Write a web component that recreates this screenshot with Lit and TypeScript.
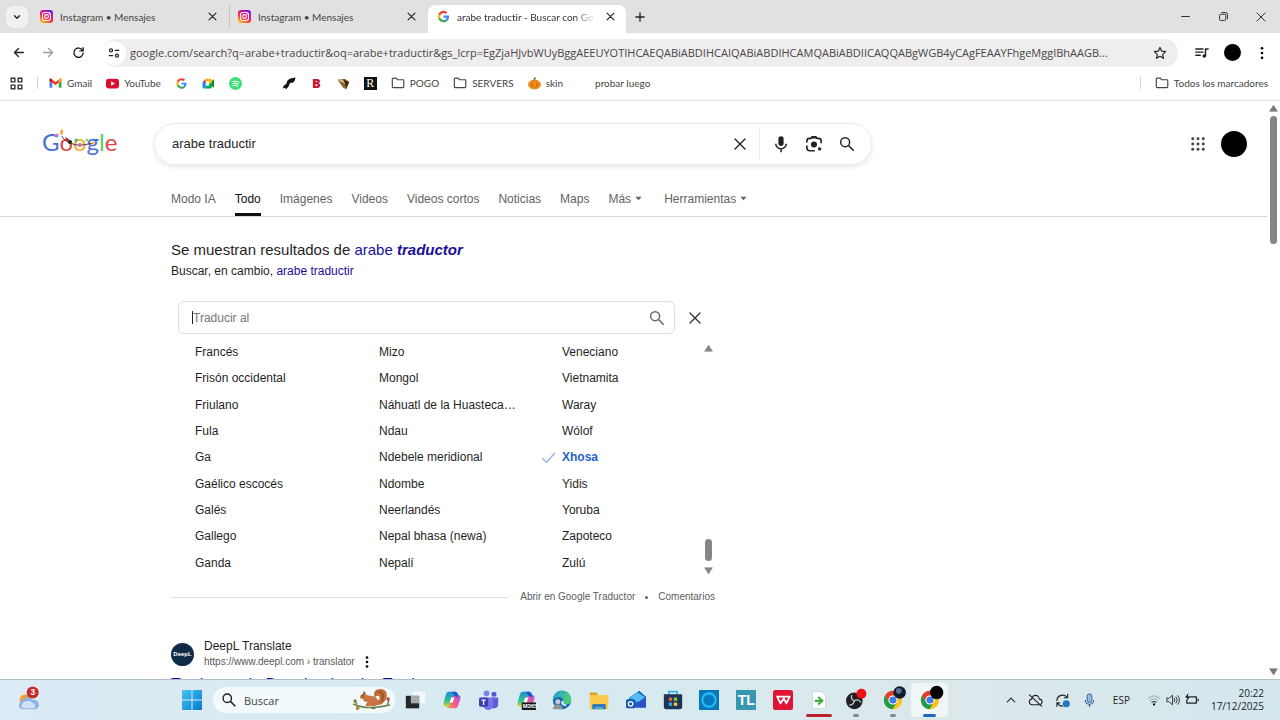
import { LitElement, html, css, svg, nothing } from "lit";
import { customElement } from "lit/decorators.js";
import { classMap } from "lit/directives/class-map.js";

const icon = (size: number, box: string, body: unknown, cls = "") =>
  html`<svg class="ico ${cls}" width=${size} height=${size} viewBox=${box} aria-hidden="true">${body}</svg>`;
const stroke = (d: string, w = 1.5) =>
  svg`<path d=${d} fill="none" stroke="currentColor" stroke-width=${w} stroke-linecap="round" stroke-linejoin="round"/>`;

const googleG = svg`
  <path fill="#ea4335" d="M24 9.500c3.540 0 6.710 1.220 9.210 3.600l6.850-6.850C35.900 2.380 30.470 0 24 0 14.620 0 6.510 5.380 2.560 13.220l7.980 6.190C12.430 13.720 17.740 9.500 24 9.500z"/>
  <path fill="#4285f4" d="M46.980 24.550c0-1.570-.15-3.090-.38-4.550H24v9.020h12.940c-.58 2.960-2.260 5.480-4.780 7.180l7.730 6c4.510-4.180 7.090-10.360 7.090-17.650z"/>
  <path fill="#fbbc05" d="M10.530 28.590c-.48-1.450-.76-2.990-.76-4.590s.27-3.140.76-4.590l-7.980-6.190C.92 16.460 0 20.120 0 24s.92 7.540 2.560 10.780z"/>
  <path fill="#34a853" d="M24 48c6.480 0 11.930-2.130 15.890-5.810l-7.730-6c-2.150 1.450-4.920 2.300-8.160 2.300-6.260 0-11.570-4.220-13.470-9.910l-7.980 6.190C6.510 42.620 14.620 48 24 48z"/>`;

const instagram = svg`
  <defs><linearGradient id="ig" x1=".2" y1="1" x2=".8" y2="0">
    <stop offset="0" stop-color="#ffc02e"/><stop offset=".4" stop-color="#fd2f3f"/><stop offset=".7" stop-color="#d3109c"/><stop offset="1" stop-color="#5b20e8"/>
  </linearGradient></defs>
  <rect width="26" height="26" rx="6" fill="url(#ig)"/>
  <rect x="5" y="5" width="16" height="16" rx="4.500" fill="none" stroke="#fff" stroke-width="2.200"/>
  <circle cx="13" cy="13" r="3.800" fill="none" stroke="#fff" stroke-width="2.200"/><circle cx="18" cy="8.200" r="1.200" fill="#fff"/>`;

const folder = stroke("M1.500 3.500a1 1 0 0 1 1-1h3.500l1.600 1.800h6a1 1 0 0 1 1 1v7a1 1 0 0 1-1 1h-11.100a1 1 0 0 1-1-1z", 1.3);
const cross = stroke("M3 3 13 13M13 3 3 13", 1.7);
const magnifier = svg`<circle cx="9.500" cy="9.500" r="6" fill="none" stroke="currentColor" stroke-width="2"/><path d="M14 14 21 21" stroke="currentColor" stroke-width="2.200"/>`;

const gmail = svg`<path fill="#4285f4" d="M1 20V6l5 4v10z"/><path fill="#34a853" d="M23 20V6l-5 4v10z"/>
  <path fill="#ea4335" d="M1 7V4.500C1 3 3 2.500 4.500 3.500L12 9l7.500-5.500C21 2.500 23 3 23 4.500V7l-11 8z"/><path fill="#fbbc04" d="M18 5v6l5-4V4.500C23 3 21 2.500 19.500 3.500z"/><path fill="#c5221f" d="M6 5v6L1 7V4.500C1 3 3 2.500 4.500 3.500z"/>`;
const youtube = svg`<rect x="0" y="3" width="24" height="18" rx="5" fill="#d8112f"/><path fill="#fff" d="M9.500 8v8l7-4z"/>`;
const meet = svg`<path fill="#00832d" d="M16 9l6-5v16l-6-5z"/><path fill="#2684fc" d="M1 9h6v12H3a2 2 0 0 1-2-2z"/><path fill="#ea4335" d="M7 3v6H1z"/><path fill="#ffba00" d="M7 3h9a2 2 0 0 1 2 2v7h-5V8H7z"/><path fill="#00ac47" d="M7 16h6v-4h5v7a2 2 0 0 1-2 2H7z"/>`;
const spotify = svg`<circle cx="12" cy="12" r="12" fill="#3dde75"/><g stroke="#e9fff0" fill="none" stroke-width="2" stroke-linecap="round"><path d="M5.500 8.500q7-2 13 1.200M6.500 12.300q5.500-1.500 10.500 1.200M7.200 16q4.500-1.200 8.500 1"/></g>`;
const blackMark = svg`<path fill="#111" d="M23 1C16 2 11 3 8 7L6 13 1 16l-1 5 4-1 1 3 5-5 3-7 6-1 3-4z"/>`;
const horn = svg`<path fill="#8b6330" d="M1 5 14 3l9 6-6 14-6-4z"/><path fill="#d9b77a" d="m2 6 9-2 5 9z"/><path fill="#3f2a15" d="m11 4 11 5-5 12-2-9z"/>`;
const pumpkin = svg`<ellipse cx="12" cy="14" rx="12" ry="9" fill="#f08a1c"/><path d="M12 6q-1-3 2-5" stroke="#7b7c2b" stroke-width="3" fill="none"/><path d="M7 12l2 3H5zM17 12l2 3h-4zM6 17q6 4 12 0-6 2-12 0" fill="#a84c08"/><path d="M9 6q-4 8 0 16M15 6q4 8 0 16" stroke="#cf6f10" fill="none"/>`;

const copilot = svg`<defs>
    <linearGradient id="cpA" x1="0" y1="0" x2="0" y2="1"><stop offset="0" stop-color="#178fe0"/><stop offset=".6" stop-color="#2fc08c"/><stop offset="1" stop-color="#e5d131"/></linearGradient>
    <linearGradient id="cpB" x1="1" y1="0" x2="0" y2="1"><stop offset="0" stop-color="#a858e6"/><stop offset=".5" stop-color="#f0558c"/><stop offset="1" stop-color="#ff9a44"/></linearGradient></defs>
  <path fill="url(#cpA)" d="M8 2h8q2 0 3 3l1 3h-5q-2 0-3 3l-2 7q-1 2-3 2H5q-4 0-3-5L4.500 6Q5.500 2 8 2z"/>
  <path fill="url(#cpB)" d="M16 22H8q-1.500 0-2-2 3 0 4-3l3-9q1-3 4-2h2q4 0 3 5l-2.500 7q-1 4-3.500 4z"/><path fill="#1f55cf" d="M12 2h4q2 0 3 3l1 3h-3l-2-1z"/><path fill="#fff" d="m11 9-2 6h4l2-6z"/>`;

const chromeIcon = svg`<circle cx="12" cy="12" r="11" fill="#fbc116"/><path fill="#e33b2e" d="M2.500 6.500A11 11 0 0 1 21.500 6.500H12a5.500 5.500 0 0 0-5 7.500z"/><path fill="#229a4b" d="M2.500 6.500A11 11 0 0 0 11.500 23l5-8.500a5.500 5.500 0 0 1-9.300 0z"/><circle cx="12" cy="12" r="5.500" fill="#fff"/><circle cx="12" cy="12" r="4.300" fill="#3b7de9"/>`;

type Task = { name: string; body: unknown; mark?: string; on?: boolean };
const TASKS: Task[] = [
  { name: "Vista de tareas", body: svg`<path fill="#f5f8f8" d="M9 2h15v14H9z"/><path fill="#232828" d="M1 7h16v15H1z"/><path fill="#a9adad" d="M7 7h10v9H7z"/>` },
  { name: "Copilot", body: copilot },
  { name: "Teams", body: svg`<circle cx="9" cy="4" r="3.500" fill="#7b83eb"/><circle cx="18" cy="5" r="3" fill="#5059c9"/><path fill="#5b5fd6" d="M14 9h9v8a5 5 0 0 1-9 3z"/><path fill="#7b74e8" d="M4 9h13v8a6 6 0 0 1-12 2z"/><rect y="9" width="11" height="11" rx="2" fill="#4240b0"/><path d="M3 12h5M5.500 12v6" stroke="#fff" stroke-width="1.500"/>` },
  { name: "Microsoft 365", body: svg`${copilot}<rect x="7" y="15" width="17" height="9" fill="#16181c"/><text class="tiny" x="8" y="22">M365</text>` },
  { name: "Edge", body: svg`<defs><linearGradient id="ed" x1="0" y1="0" x2="1" y2=".4"><stop offset="0" stop-color="#2398dc"/><stop offset="1" stop-color="#50ce72"/></linearGradient></defs>
    <circle cx="12" cy="12" r="11" fill="#1769b8"/><path fill="url(#ed)" d="M1 12a11 11 0 0 1 22-1q.5 6-6 6-5-1-3-5-3-5-8-3-5 2-5 3z"/><path fill="#e6f6fa" d="M14 12q-2 5 4 5.500l-2 2q-5-1-5-5z"/><circle cx="7" cy="14" r="3" fill="#c9cdd0"/><path fill="#909698" d="M1 23q1-6 6-6t6 6z"/>` },
  { name: "Explorador", body: svg`<path fill="#dba022" d="M1 3h8l2 3h12v6H1z"/><rect x="1" y="6" width="22" height="17" rx="1" fill="#fbcb4d"/><path fill="#1f75bb" d="M4 17h16v6H4z"/><path fill="#58a6dc" d="M7 20h10v3H7z"/>` },
  { name: "Outlook", body: svg`<path fill="#1469c6" d="m4 9 12-8 8 7v13H4z"/><path fill="#53bdf3" d="m4 9 10-6 9 6-9 6z"/><path fill="#2b52c9" d="m14 15 10-7v13H8z"/><rect y="11" width="11" height="11" rx="2" fill="#155bb0"/><circle cx="5.500" cy="16.500" r="2.700" fill="none" stroke="#fff" stroke-width="1.500"/>` },
  { name: "Store", body: svg`<path fill="none" stroke="#3daee9" stroke-width="2" d="M7 6V2h10v4"/><path fill="#1d3554" d="M1 5h22v15q0 3-3 3H4q-3 0-3-3z"/><path fill="#ef6044" d="M7 9h4v4H7z"/><path fill="#8bc34a" d="M13 9h4v4h-4z"/><path fill="#39a8ed" d="M7 15h4v4H7z"/><path fill="#fcc531" d="M13 15h4v4h-4z"/>` },
  { name: "Alexa", body: svg`<path fill="#0878bd" d="M0 0h24v24H0z"/><circle cx="12" cy="12" r="8" fill="none" stroke="#22c0f4" stroke-width="2.500"/>` },
  { name: "TL", body: svg`<path fill="#3797b0" d="M0 0h24v24H0z"/><text class="tl" x="2" y="18">TL</text>` },
  { name: "WPS", body: svg`<rect width="24" height="24" rx="3" fill="#df1434"/><path fill="none" stroke="#fff" stroke-width="2.200" stroke-linejoin="round" d="M4 8h12M5 8l4 8 4-6 3 6 4-8h-4"/>` },
  { name: "Documento", mark: "red", body: svg`<path fill="#fff" stroke="#c9d3cf" d="M4 2h11l5 5v15H4z"/><path d="M7 13h8M11 8.500l5 4.500-5 4.500" fill="none" stroke="#3dae3f" stroke-width="2.500"/>` },
  { name: "OBS", mark: "dot", body: svg`<circle cx="10" cy="13" r="10" fill="#202124"/><g fill="none" stroke="#c9cbce" stroke-width="1.500"><path d="M10 13q-5-2-3-7M10 13q5-3 8 2M10 13q-1 5-6 5"/></g><circle cx="18.500" cy="4.500" r="6" fill="#ee1018"/>` },
  { name: "Chrome", mark: "dot", body: svg`${chromeIcon}<circle cx="20" cy="3" r="7.500" fill="#131c2d"/><circle cx="19" cy="1" r="3.500" fill="#54719a"/>` },
  { name: "Chrome activo", mark: "blue", on: true, body: svg`${chromeIcon}<circle cx="20" cy="3" r="8" fill="#000"/>` },
];

const LANGS = [
  "Francés", "Frisón occidental", "Friulano", "Fula", "Ga", "Gaélico escocés", "Galés", "Gallego", "Ganda",
  "Mizo", "Mongol", "Náhuatl de la Huasteca…", "Ndau", "Ndebele meridional", "Ndombe", "Neerlandés", "Nepal bhasa (newa)", "Nepalí",
  "Veneciano", "Vietnamita", "Waray", "Wólof", "Xhosa", "Yidis", "Yoruba", "Zapoteco", "Zulú",
];

const base = css`
  * { box-sizing: border-box; }
  button, input { font: inherit; color: inherit; background: none; border: 0; padding: 0; margin: 0; outline: 0; }
  button { display: inline-flex; align-items: center; justify-content: center; flex: none; }
  a { color: inherit; text-decoration: none; }
  .ico { display: block; flex: none; overflow: visible; }
`;

@customElement("browser-chrome")
export class BrowserChrome extends LitElement {
  static styles = [base, css`
    :host { display: block; flex: none; font: 10px/16px Lato, "Open Sans", sans-serif; font-variant-ligatures: none; color: #444; border-bottom: 1px solid #e0e0e0; background: #fff; }
    .tabs { display: flex; height: 33px; background: #e1e1e1; padding-left: 6px; }
    .drop { width: 22px; height: 22px; margin: 6px 4px 0 0; border-radius: 8px; background: #f1f1f1; color: #222; }
    .tab { display: flex; align-items: center; gap: 7px; width: 198px; padding: 0 9px 0 8px; margin-top: 5px; height: 23px; border-right: 1px solid #c6c6c6; }
    .tab.last { border: 0; }
    .tab.on { height: 28px; padding: 0 8px 5px 9px; border: 0; border-radius: 8px 8px 0 0; background: #fff; color: #333; }
    .name { flex: 1; overflow: hidden; white-space: nowrap; }
    .on .name { mask-image: linear-gradient(90deg, #000 85%, transparent); }
    .tab button { width: 16px; height: 16px; color: #222; }
    .plus { width: 28px; height: 33px; color: #222; }
    .win { margin-left: auto; display: flex; color: #222; }
    .win button { width: 38px; height: 33px; }
    .bar { display: flex; align-items: center; gap: 4px; height: 39px; padding: 0 5px; color: #222; }
    .bar > button { width: 26px; height: 26px; }
    .dim { color: #999; }
    .omni { display: flex; align-items: center; flex: 1; gap: 4px; height: 28px; border-radius: 14px; background: #efedee; margin: 0 7px 0 7px; }
    .site { width: 24px; height: 24px; border-radius: 50%; background: #fff; }
    .omni input { flex: 1; min-width: 0; font: 11px/16px "Open Sans", sans-serif; text-overflow: ellipsis; color: #484848; }
    .omni .star { width: 36px; height: 28px; }
    .avatar { width: 17px; height: 17px; border-radius: 50%; background: #000; }
    .marks { display: flex; align-items: center; gap: 14px; height: 28px; padding: 0 12px 6px 10px; }
    .marks a { display: flex; align-items: center; gap: 5px; white-space: nowrap; }
    .sep { width: 1px; height: 12px; background: #d3d3d3; }
    .marks .sep { margin: 0 -3px 0 0; }
    .marks .push { margin: 0 0 0 auto; }
    .blank { width: 13px; height: 13px; }
    .sq { width: 13px; height: 13px; background: #111; color: #fff; font: 12px/13px "Liberation Serif", serif; text-align: center; }
    .bee { width: 13px; color: #c5122e; font: 800 13px/16px "Open Sans", sans-serif; text-align: center; }
  `];
  private tab(title: string, body: unknown, box: string, on = false, last = false) {
    return html`<div class=${classMap({ tab: true, on, last })}>${icon(13, box, body)}<span class="name">${title}</span>
      <button aria-label="Cerrar pestaña">${icon(11, "0 0 16 16", cross)}</button></div>`;
  }
  private mark(title: string, glyph: unknown) {
    return html`<a href="#" aria-label=${title || "Marcador"}>${glyph}${title ? html`<span>${title}</span>` : nothing}</a>`;
  }
  render() {
    const i = (b: unknown, box = "0 0 24 24") => icon(13, box, b);
    return html`
      <div class="tabs">
        <button class="drop" aria-label="Buscar pestañas">${icon(10, "0 0 16 16", stroke("M4 6l4 4 4-4", 2.2))}</button>
        ${this.tab("Instagram • Mensajes", instagram, "0 0 26 26")}
        ${this.tab("Instagram • Mensajes", instagram, "0 0 26 26", false, true)}
        ${this.tab("arabe traductir - Buscar con Go", googleG, "-3 -3 54 54", true)}
        <button class="plus" aria-label="Nueva pestaña">${icon(12, "0 0 16 16", stroke("M8 2.500v11M2.500 8h11", 1.8))}</button>
        <div class="win">
          <button aria-label="Minimizar">${icon(9, "0 0 16 16", stroke("M1 8h14", 1.6))}</button>
          <button aria-label="Restaurar">${icon(9, "0 0 16 16", svg`<rect x="1" y="4" width="11" height="11" rx="2" fill="none" stroke="currentColor" stroke-width="1.600"/>${stroke("M5 1h7q3 0 3 3v8", 1.6)}`)}</button>
          <button aria-label="Cerrar">${icon(10, "0 0 16 16", stroke("M1.500 1.500l13 13M14.500 1.500l-13 13", 1.5))}</button>
        </div>
      </div>
      <div class="bar">
        <button aria-label="Atrás">${icon(13, "0 0 16 16", stroke("M14 8H3M8 3 3 8l5 5", 1.6))}</button>
        <button class="dim" aria-label="Adelante">${icon(13, "0 0 16 16", stroke("M2 8h11M8 3l5 5-5 5", 1.6))}</button>
        <button aria-label="Recargar">${icon(13, "0 0 16 16", stroke("M13 5.500A5.700 5.700 0 1 0 13.700 8.500M13.700 2v4h-4", 1.7))}</button>
        <div class="omni">
          <button class="site" aria-label="Información del sitio">${icon(12, "0 0 16 16", svg`<g fill="none" stroke="currentColor" stroke-width="1.700"><circle cx="4" cy="4.500" r="2"/><path d="M9 4.500h6M1 11.500h6"/><circle cx="12" cy="11.500" r="2"/></g>`)}</button>
          <input aria-label="Barra de direcciones" value="google.com/search?q=arabe+traductir&oq=arabe+traductir&gs_lcrp=EgZjaHJvbWUyBggAEEUYOTIHCAEQABiABDIHCAIQABiABDIHCAMQABiABDIICAQQABgWGB4yCAgFEAAYFhgeMggIBhAAGB..." />
          <button class="star" aria-label="Añadir a marcadores">${icon(14, "0 0 24 24", stroke("M12 2.500l2.900 6.300 6.800.8-5 4.700 1.300 6.800-6-3.400-6 3.400 1.300-6.800-5-4.700 6.800-.8z", 2))}</button>
        </div>
        <button aria-label="Control multimedia">${icon(14, "0 0 16 16", svg`${stroke("M1 3.500h8M1 7h8M1 10.500h5M12 11.500V3.500h3", 1.7)}<circle cx="10.500" cy="11.500" r="2" fill="currentColor"/>`)}</button>
        <button aria-label="Perfil"><span class="avatar"></span></button>
        <button aria-label="Menú">${icon(14, "0 0 16 16", svg`<circle cx="8" cy="2.500" r="1.500"/><circle cx="8" cy="8" r="1.500"/><circle cx="8" cy="13.500" r="1.500"/>`)}</button>
      </div>
      <nav class="marks" aria-label="Marcadores">
        ${this.mark("", icon(13, "0 0 16 16", svg`<g fill="none" stroke="#333" stroke-width="1.700"><path d="M1.500 1.500h4.500v4.500H1.500zM10 1.500h4.500v4.500H10zM1.500 10h4.500v4.500H1.500zM10 10h4.500v4.500H10z"/></g>`))}
        <span class="sep"></span>
        ${this.mark("Gmail", i(gmail))}${this.mark("YouTube", i(youtube))}
        ${this.mark("", i(googleG, "-6 -6 60 60"))}${this.mark("", i(meet))}${this.mark("", i(spotify))}
        <span class="blank"></span>
        ${this.mark("", i(blackMark))}${this.mark("", html`<span class="bee">B</span>`)}${this.mark("", i(horn))}${this.mark("", html`<span class="sq">R</span>`)}
        ${this.mark("POGO", icon(14, "0 0 16 16", folder))}${this.mark("SERVERS", icon(14, "0 0 16 16", folder))}
        ${this.mark("skin", i(pumpkin))}${this.mark("probar luego", html`<span class="blank"></span>`)}
        <span class="sep push"></span>
        ${this.mark("Todos los marcadores", icon(14, "0 0 16 16", folder))}
      </nav>`;
  }
}

@customElement("search-page")
export class SearchPage extends LitElement {
  static styles = [base, css`
    :host { display: flex; flex: 1; min-height: 0; font: 12px/16px "Liberation Sans", Arial, sans-serif; color: #1f1f1f; background: #fff; }
    .page { flex: 1; min-width: 0; overflow: hidden; }
    header { display: flex; align-items: center; padding: 22px 20px 16px 42px; }
    .logo { position: relative; width: 76px; height: 32px; margin-right: 36px; font: 24px/28px Lato, sans-serif; white-space: nowrap; }
    .doodle { position: absolute; left: 0; top: 0; }
    .b { color: #4a6fdc; } .r { color: #dd4646; } .y { color: #edb52c; } .g { color: #5ecb69; }
    .box { display: flex; align-items: center; flex: 0 1 718px; height: 42px; padding: 0 8px 0 17px; border-radius: 21px; border: 1px solid #ececec; box-shadow: 0 2px 5px #0000001a; }
    .box input { flex: 1; min-width: 0; font-size: 13px; }
    .box button { width: 33px; height: 33px; color: #222; }
    .box .clear { width: 40px; border-right: 1px solid #ececec; margin-right: 4px; }
    .account { display: flex; align-items: center; gap: 16px; margin-left: auto; color: #444; }
    .avatar { width: 26px; height: 26px; border-radius: 50%; background: #000; }
    .nav { display: flex; gap: 19px; height: 36px; padding-left: 171px; border-bottom: 1px solid #d6d6d6; color: #636466; }
    .nav a, .nav button { display: flex; align-items: center; gap: 4px; height: 35px; white-space: nowrap; }
    .nav .on { color: #111; border-bottom: 3px solid #111; padding-top: 3px; }
    .nav .tools { margin-left: 3px; }
    main { padding: 22px 20px 0 171px; }
    .fix { font-size: 15px; line-height: 22px; }
    .alt { line-height: 20px; }
    .fix a, .alt a { color: #1a0f99; }
    .panel { max-width: 544px; margin-top: 20px; }
    .find { display: flex; align-items: center; padding-left: 7px; }
    .field { display: flex; align-items: center; flex: 1; height: 33px; padding: 0 8px 0 13px; border: 1px solid #dcdee0; border-radius: 6px; color: #666; }
    .field input { flex: 1; min-width: 0; }
    .field input::placeholder { color: #777; opacity: 1; }
    .caret { width: 1px; height: 13px; background: #222; }
    .shut { width: 40px; height: 33px; color: #333; }
    .scroll { display: flex; margin-top: 5px; }
    .langs { flex: 1; display: grid; grid-template-columns: 184px 183px 1fr; grid-template-rows: repeat(9, 1fr); grid-auto-flow: column; height: 237px; padding-left: 24px; }
    .langs button { position: relative; justify-content: flex-start; width: 139px; white-space: nowrap; }
    .langs .sel { color: #2464cf; font-weight: 700; }
    .tick { position: absolute; left: -21px; color: #9fb0ea; }
    .rail { display: flex; flex-direction: column; align-items: center; width: 13px; padding: 5px 0 1px; color: #868686; }
    .rail i { flex: none; width: 7px; height: 22px; border-radius: 4px; background: #868686; margin: auto 0 5px; }
    .foot { display: flex; align-items: center; gap: 10px; margin-top: 13px; font-size: 10px; color: #5b5c5e; line-height: 16px; }
    .foot hr { flex: 1; margin: 0 2px 0 0; border: 0; border-top: 1px solid #dcdcdc; }
    .foot b { width: 3px; height: 3px; border-radius: 50%; background: #666; }
    .result { display: flex; align-items: center; gap: 10px; margin-top: 33px; }
    .fav { display: flex; align-items: center; justify-content: center; width: 23px; height: 23px; border-radius: 50%; background: #0f2b46; color: #fff; font-size: 6px; font-weight: 700; }
    .url { display: flex; gap: 6px; font-size: 10px; color: #55585b; }
    h3 { margin: 5px 0 0; font-weight: 400; font-size: 16px; line-height: 20px; color: #1a0f99; }
    .bar { display: flex; flex-direction: column; align-items: center; width: 13px; padding: 3px 0; color: #777; }
    .bar i { width: 7px; height: 128px; margin: 3px 0 auto; border-radius: 4px; background: #858585; }
  `];
  render() {
    const up = icon(9, "0 0 16 16", svg`<path d="M8 2 15 13H1z" fill="currentColor" stroke="currentColor" stroke-linejoin="round"/>`);
    const down = icon(9, "0 0 16 16", svg`<path d="M8 14 15 3H1z" fill="currentColor" stroke="currentColor" stroke-linejoin="round"/>`);
    const caret = icon(7, "0 0 16 16", svg`<path d="M1 4h14l-7 8z" fill="currentColor"/>`);
    return html`
      <div class="page">
        <header>
          <a class="logo" href="#" aria-label="Google"><span class="b">G</span><span class="r">o</span><span class="y">o</span><span class="b">g</span><span class="g">l</span><span class="r">e</span>
            <svg class="doodle" width="76" height="32" viewBox="0 0 76 32" aria-hidden="true">
              <path d="M20 8c2 5 6 6 11 8s12 1 20-1" fill="none" stroke="#444"/>
              <path d="M19 7q-2-4 1-6 2 3 0 6z" fill="#f0a02c"/><path d="M12 7q3-3 5 0-2 3-5 0z" fill="#dd74d0"/>
              <circle cx="28" cy="14" r="2" fill="#222"/><circle cx="34" cy="12" r="1.500" fill="#35b1a4"/><circle cx="38" cy="17" r="2" fill="#e565a7"/><circle cx="45" cy="12" r="1.500" fill="#8bd661"/><circle cx="51" cy="15" r="1.500" fill="#f2b02c"/><path d="M23 9l4 2-2 3z" fill="#b32f26"/>
            </svg></a>
          <form class="box" role="search">
            <input aria-label="Buscar" value="arabe traductir" />
            <button type="button" class="clear" aria-label="Borrar">${icon(16, "0 0 16 16", stroke("M3 3 13 13M13 3 3 13", 1.4))}</button>
            <button type="button" aria-label="Buscar por voz">${icon(18, "0 0 24 24", svg`<rect x="8.500" y="1.500" width="7" height="13" rx="3.500" fill="currentColor"/><path d="M5 11.500a7 7 0 0 0 14 0M12 18.500V23" fill="none" stroke="currentColor" stroke-width="2"/>`)}</button>
            <button type="button" aria-label="Buscar por imagen">${icon(18, "0 0 24 24", svg`<path d="M2.500 10V8q0-3.500 3.500-3.500h2L9.500 2.500h5L16 4.500h2q3.500 0 3.500 3.500v3M2.500 14v3q0 4 4 4H13" fill="none" stroke="currentColor" stroke-width="2.200"/><path d="M8 4.800 9.500 2h5L16 4.800z" fill="currentColor"/><circle cx="12" cy="12.500" r="4" fill="currentColor"/><circle cx="19.500" cy="18.500" r="2.300" fill="currentColor"/>`)}</button>
            <button type="button" aria-label="Buscar">${icon(18, "0 0 24 24", magnifier)}</button>
          </form>
          <div class="account">
            <button aria-label="Aplicaciones">${icon(14, "0 0 16 16", svg`${[2, 8, 14].map((y) => [2, 8, 14].map((x) => svg`<circle cx=${x} cy=${y} r="1.700" fill="currentColor"/>`))}`)}</button>
            <button class="avatar" aria-label="Cuenta"></button>
          </div>
        </header>
        <nav class="nav">
          <a href="#">Modo IA</a><a href="#" class="on">Todo</a><a href="#">Imágenes</a><a href="#">Videos</a><a href="#">Videos cortos</a><a href="#">Noticias</a><a href="#">Maps</a>
          <button>Más ${caret}</button><button class="tools">Herramientas ${caret}</button>
        </nav>
        <main>
          <div class="fix">Se muestran resultados de <a href="#">arabe <b><em>traductor</em></b></a></div>
          <div class="alt">Buscar, en cambio, <a href="#">arabe traductir</a></div>
          <section class="panel">
            <div class="find">
              <div class="field"><span class="caret"></span><input aria-label="Traducir al" placeholder="Traducir al" />${icon(18, "0 0 24 24", magnifier)}</div>
              <button class="shut" aria-label="Cerrar">${icon(16, "0 0 16 16", stroke("M3 3 13 13M13 3 3 13", 1.4))}</button>
            </div>
            <div class="scroll">
              <div class="langs">${LANGS.map((l) => html`<button class=${classMap({ sel: l === "Xhosa" })}>${l === "Xhosa" ? icon(15, "0 0 16 16", stroke("M1.500 9l4.500 4L14.500 3.500", 1.5), "tick") : nothing}<span>${l}</span></button>`)}</div>
              <div class="rail">${up}<i></i>${down}</div>
            </div>
            <div class="foot"><hr /><a href="#">Abrir en Google Traductor</a><b></b><a href="#">Comentarios</a></div>
          </section>
          <article>
            <div class="result"><span class="fav">DeepL</span>
              <div><div>DeepL Translate</div><div class="url">https://www.deepl.com › translator
                <button aria-label="Más información">${icon(12, "0 0 16 16", svg`<circle cx="8" cy="2" r="1.800"/><circle cx="8" cy="8" r="1.800"/><circle cx="8" cy="14" r="1.800"/>`)}</button></div></div></div>
            <h3><a href="#">Traductor de DeepL: el mejor Traductor</a></h3>
          </article>
        </main>
      </div>
      <div class="bar">${up}<i></i>${down}</div>`;
  }
}

@customElement("task-bar")
export class TaskBar extends LitElement {
  static styles = [base, css`
    :host { display: grid; grid-template-columns: 174px auto 1fr; align-items: center; height: 40px; flex: none; border-top: 1px solid #aebfc6; background: linear-gradient(90deg, #dcebf5, #d6eaf0 50%, #dce8ea 75%, #d3e7ee); font: 11px/13px "Open Sans", "Noto Sans", sans-serif; color: #222; }
    .weather { width: 26px; height: 30px; margin-left: 16px; }
    .mid { display: flex; align-items: center; }
    .start { width: 36px; height: 36px; margin-right: 3px; }
    .find { display: flex; align-items: center; gap: 8px; width: 182px; height: 26px; padding: 0 2px 0 9px; border-radius: 13px; background: #f3fafc; }
    .find input { flex: 1; min-width: 0; }
    .find input::placeholder { color: #444; opacity: 1; }
    .apps { display: flex; width: 551px; margin-left: 2px; }
    .apps button { position: relative; flex: 1; height: 34px; border-radius: 4px; }
    .apps .on { background: #eef6f7; }
    .dot, .red, .blue { position: absolute; bottom: 0; width: 6px; height: 3px; border-radius: 2px; background: #85898c; }
    .red { width: 26px; background: #b9252f; }
    .blue { width: 13px; background: #1d68bd; }
    .tiny { font: 700 7px "Liberation Sans", sans-serif; fill: #fff; }
    .tl { font: 700 17px "Liberation Sans", sans-serif; fill: #fff; }
    .three { font: 700 9px "Liberation Sans", sans-serif; fill: #fff; }
    .tray { display: flex; align-items: center; justify-content: flex-end; gap: 12px; padding-right: 16px; }
    .group { display: flex; gap: 5px; margin: 0 0 0 5px; }
    .esp { font-size: 10px; margin-left: 4px; }
    .clock { text-align: right; font-size: 10px; line-height: 13px; }
  `];
  render() {
    return html`
      <button class="weather" aria-label="Clima">${icon(26, "0 0 26 28", svg`<circle cx="9" cy="14" r="6" fill="#f5a12b"/><path d="M5 24a5 5 0 0 1 0-9 7 7 0 0 1 12-1 5 5 0 0 1 3 10z" fill="#8db4e6"/><path d="M6 23a4 4 0 0 1 1-6 7 7 0 0 1 10 0 4 4 0 0 1 2 6z" fill="#cfe2f8"/><circle cx="17" cy="6" r="6.500" fill="#c42b2b"/><text class="three" x="14.500" y="9">3</text>`)}</button>
      <div class="mid">
        <button class="start" aria-label="Inicio">${icon(20, "0 0 20 20", svg`<defs><linearGradient id="w" x2="1" y2="1"><stop stop-color="#47c4f3"/><stop offset="1" stop-color="#0878cf"/></linearGradient></defs><path fill="url(#w)" d="M0 0h9.500v9.500H0zM10.500 0H20v9.500h-9.500zM0 10.500h9.500V20H0zM10.500 10.500H20V20h-9.500z"/>`)}</button>
        <label class="find">${icon(14, "2 2 20 20", magnifier)}<input placeholder="Buscar" aria-label="Buscar" />
          <svg class="ico" width="42" height="22" viewBox="0 0 42 22" aria-hidden="true">
            <path d="M2 15q9 4 19 3.500t18-2.500M6 16v5M6 15 3 11M36 17l2-6" stroke="#76804a" stroke-width="1.500" fill="none"/>
            <path d="M25 16q-2-2 1-4 4-2 2-5-3-1-4 2-3-6 2-8.500 7-2 9.500 3 1.500 7-4 11-3 2-6.500 1.500z" fill="#c07038"/><path d="M25 3q5-3 8 2 1 5-3 9 2-6 0-9-2-2-5-2z" fill="#a3542a"/>
            <path d="M9 8q1-4 5-3 3 2 7 2 6 1 6 6 0 4-4 4h-8q-1-2 2-4-5 0-5-3-3 0-3-2z" fill="#c87543"/><path d="M12 5l1-3 2 3z" fill="#8b4522"/><circle cx="12" cy="7" r=".8" fill="#222"/>
            <circle cx="4" cy="12" r="1.700" fill="#8c7a3e"/><circle cx="7" cy="19" r="1.700" fill="#b48b42"/><circle cx="37" cy="10" r="1.700" fill="#b5483b"/><path d="M19 18q3 4 6 1z" fill="#5f7c40"/>
          </svg></label>
        <div class="apps">${TASKS.map((t) => html`<button class=${classMap({ on: !!t.on })} aria-label=${t.name}>${icon(20, "0 0 24 24", t.body)}${t.mark ? html`<span class=${t.mark}></span>` : nothing}</button>`)}</div>
      </div>
      <div class="tray">
        <button aria-label="Iconos ocultos">${icon(10, "0 0 16 16", stroke("M2 11l6-6 6 6", 1.7))}</button>
        <button aria-label="OneDrive">${icon(15, "0 0 16 16", stroke("M5 12.500a3 3 0 0 1-1-6 4 4 0 0 1 8 0 3 3 0 0 1 0 6zM1.500 2l13 12", 1.2))}</button>
        <button aria-label="Actualización">${icon(15, "0 0 16 16", svg`${stroke("M2 8a6 6 0 0 1 11-3M13.500 1.500V5H10M8 14a6 6 0 0 1-5.500-3.500M2 14v-3.500h3", 1.2)}<circle cx="12" cy="11.500" r="3.800" fill="#2079c0"/>`)}</button>
        <button aria-label="Micrófono">${icon(15, "0 0 16 16", svg`<rect x="5.500" y="1" width="5" height="9" rx="2.500" fill="#8fbce6" stroke="#345a92"/><path d="M3.500 7.500a4.500 4.500 0 0 0 9 0M8 12v3" fill="none" stroke="#345a92" stroke-width="1.200"/>`)}</button>
        <span class="esp">ESP</span>
        <div class="group">
          ${icon(14, "0 0 16 16", svg`<g fill="none" stroke-width="1.200"><path stroke="#aab5b9" d="M1 6.500q7-6.500 14 0M3.200 9q4.800-4.500 9.600 0"/><path stroke="#333" d="M5.200 11q2.800-2.600 5.600 0"/></g><circle cx="8" cy="13" r="1.300"/>`)}
          ${icon(14, "0 0 16 16", stroke("M1 6v4h2.500L7.500 13.500v-11L3.500 6zM9.500 6q1.500 2 0 4M11.500 4.500q3 3.500 0 7M13.500 3q4 5 0 10", 1))}
          ${icon(14, "0 0 16 16", svg`${stroke("M6 4.500h7v7H2V8M15 7v2", 1.4)}<path d="M4 0 0 5h3l-1 4 4-5H3z"/>`)}
        </div>
        <time class="clock">20:22<br />17/12/2025</time>
      </div>`;
  }
}

@customElement("app-root")
export class AppRoot extends LitElement {
  static styles = css`:host { display: flex; flex-direction: column; height: 100vh; overflow: hidden; background: #fff; }`;
  render() {
    return html`<browser-chrome></browser-chrome><search-page></search-page><task-bar></task-bar>`;
  }
}
